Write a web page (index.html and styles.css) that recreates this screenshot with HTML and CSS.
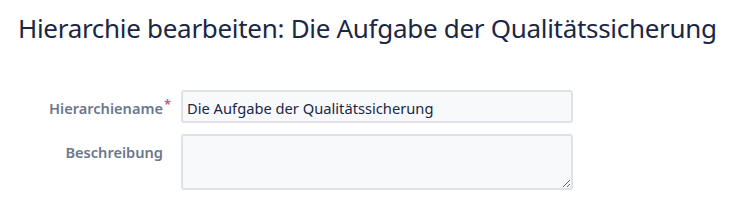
FILE: index.html
```html
<!DOCTYPE html>
<html>
<head>
    <meta charset="utf-8">
    <link rel="stylesheet" href="styles.css">
</head>
<body>
    <div class="page">
        <h2 class="page-title">Hierarchie bearbeiten: Die Aufgabe der Qualitätssicherung</h2>
        <form class="form">
            <div class="field">
                <label class="label" for="name">Hierarchiename<span class="req">*</span></label>
                <input class="input" id="name" type="text" value="Die Aufgabe der Qualitätssicherung">
            </div>
            <div class="field">
                <label class="label" for="desc">Beschreibung</label>
                <textarea class="input textarea" id="desc"></textarea>
            </div>
        </form>
    </div>
</body>
</html>
```

FILE: styles.css
```css
body {
    margin: 0;
    font-family: "Noto Sans", sans-serif;
    color: #1b2744;
    background: #fff;
}
.page {
    padding: 10px 18px;
}
.page-title {
    margin: 0;
    font-size: 26px;
    font-weight: 400;
    line-height: 36px;
    letter-spacing: -0.3px;
    color: #1b2744;
}

.form {
    margin-top: 44px;
    display: flex;
    flex-direction: column;
    gap: 11px;
}
.field {
    display: flex;
    align-items: flex-start;
}
.label {
    position: relative;
    width: 145px;
    margin-right: 18px;
    padding-top: 8px;
    text-align: right;
    font-size: 14.6px;
    font-weight: 600;
    color: #6b778c;
}
.req {
    position: absolute;
    top: 5px;
    right: -8px;
    font-size: 13px;
    color: #e83e8c;
}
.input {
    box-sizing: border-box;
    width: 392px;
    height: 33px;
    margin: 0;
    padding: 4px 4px 2px;
    font-family: inherit;
    font-size: 14.7px;
    color: #1b2744;
    background: #f8f9fb;
    border: 2px solid #dfe1e6;
    border-radius: 3px;
}
.textarea {
    height: 56px;
}
```
